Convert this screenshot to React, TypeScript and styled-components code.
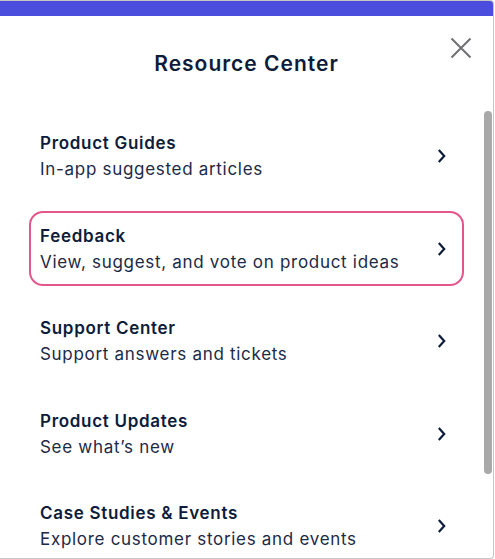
import styled, { createGlobalStyle } from "styled-components";

const GlobalStyle = createGlobalStyle`
  html, body {
    margin: 0;
    padding: 0;
    background: #ffffff;
  }
  body {
    font-family: "Inter", "Liberation Sans", sans-serif;
    -webkit-font-smoothing: antialiased;
  }
`;

// 패널 전체
const Panel = styled.div`
  position: relative;
  width: 493px;
  height: 557px;
  box-sizing: content-box;
  border: 1px solid #c6c6c6;
  border-left: none;
  border-radius: 0 4px 4px 0;
  overflow: hidden;
  background: #ffffff;
  display: flex;
  flex-direction: column;
`;

const TopBar = styled.div`
  height: 15px;
  background-color: #4b4edc;
  flex-shrink: 0;
`;

const Header = styled.div`
  position: relative;
  display: flex;
  justify-content: center;
  padding-top: 35px;
  height: 67px;
  box-sizing: border-box;
`;

const Title = styled.h2`
  margin: 0;
  font-size: 21px;
  line-height: 26px;
  font-weight: 600;
  letter-spacing: 1px;
  color: #0d1c3a;
`;

const CloseButton = styled.button`
  position: absolute;
  top: 21px;
  right: 21px;
  width: 22px;
  height: 22px;
  padding: 0;
  border: none;
  background: transparent;
  cursor: pointer;
  display: flex;
  align-items: center;
  justify-content: center;
`;

const List = styled.div`
  display: flex;
  flex-direction: column;
  gap: 17.5px;
  padding: 41px 29px 0 29px;
`;

const Item = styled.div<{ $active?: boolean }>`
  display: flex;
  align-items: center;
  justify-content: space-between;
  height: 75px;
  flex-shrink: 0;
  box-sizing: border-box;
  padding: 1px 16px 0 9px;
  border: 2px solid ${(p) => (p.$active ? "#e4558b" : "transparent")};
  border-radius: 14px;
  cursor: pointer;
`;

const ItemText = styled.div`
  display: flex;
  flex-direction: column;
`;

const ItemTitle = styled.div`
  font-size: 17px;
  line-height: 26px;
  font-weight: 600;
  letter-spacing: 0.7px;
  color: #0d1c3a;
`;

const ItemSub = styled.div`
  font-size: 17px;
  line-height: 26px;
  font-weight: 400;
  letter-spacing: 0.7px;
  color: #1b2a47;
`;

// 스크롤바 (콘텐츠 위에 겹침)
const ScrollThumb = styled.div`
  position: absolute;
  top: 110px;
  right: 1px;
  width: 8px;
  height: 363px;
  border-radius: 4px;
  background-color: #a9a9a9;
`;

const items = [
  { title: "Product Guides", sub: "In-app suggested articles" },
  { title: "Feedback", sub: "View, suggest, and vote on product ideas", active: true },
  { title: "Support Center", sub: "Support answers and tickets" },
  { title: "Product Updates", sub: "See what\u2019s new" },
  { title: "Case Studies & Events", sub: "Explore customer stories and events" },
];

function Chevron() {
  return (
    <svg width="8" height="14" viewBox="0 0 8 14" fill="none">
      <path d="M1.5 1.8 L6.2 7 L1.5 12.2" stroke="#0d1c3a" strokeWidth="2.2" strokeLinecap="square" />
    </svg>
  );
}

function CloseIcon() {
  return (
    <svg width="22" height="22" viewBox="0 0 22 22" fill="none">
      <path d="M1.5 1.5 L20.5 20.5 M20.5 1.5 L1.5 20.5" stroke="#6f6f74" strokeWidth="2" />
    </svg>
  );
}

export default function App() {
  return (
    <>
      <GlobalStyle />
      <Panel>
        <TopBar />
        <Header>
          <Title>Resource Center</Title>
          <CloseButton aria-label="Close">
            <CloseIcon />
          </CloseButton>
        </Header>
        <List>
          {items.map((item) => (
            <Item key={item.title} $active={item.active}>
              <ItemText>
                <ItemTitle>{item.title}</ItemTitle>
                <ItemSub>{item.sub}</ItemSub>
              </ItemText>
              <Chevron />
            </Item>
          ))}
        </List>
        <ScrollThumb />
      </Panel>
    </>
  );
}
